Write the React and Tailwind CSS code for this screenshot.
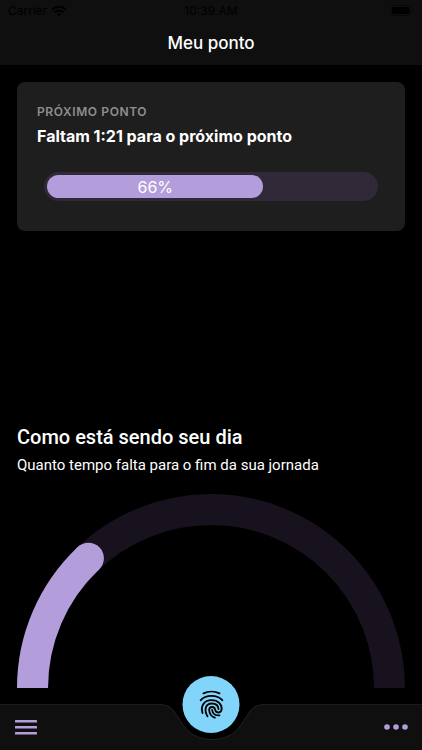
const DAY_PROGRESS = 0.259;
const NEXT_PROGRESS = 66;

const FingerprintIcon = () => (
    <svg className="block w-6 h-[29px]" viewBox="28 15 72 87" fill="none" stroke="currentColor" strokeWidth="5.6" strokeLinecap="round">
        <path d="M40 25C54 18 74 18 88 25" />
        <path d="M31 46C47 28 81 28 97 46" />
        <path d="M37 84C30 62 43 45.500 64 45.500C84 45.500 95 58 94.500 72C94 85 77 86 75 74C73 63 57 63 57 75C58 87 64 95 74 98" />
        <path d="M52 94C40 74 47 55.500 65 55.500C77 55.500 84 62 85 72" />
        <path d="M66 75C67 86 76 92 88 91" />
    </svg>
);

const StatusBar = () => (
    <div className="grid grid-cols-3 items-center h-[22px] px-2 text-xs text-black">
        <div className="flex items-center gap-1">
            <span>Carrier</span>
            <svg className="w-4 h-3" viewBox="0 0 16 12" fill="none" stroke="currentColor" strokeWidth="2">
                <path d="M1 4.6a10 10 0 0 1 14 0" />
                <path d="M3.6 7.3a6.2 6.2 0 0 1 8.8 0" />
                <path d="M8 11.6 5.7 9.3a3.3 3.3 0 0 1 4.6 0z" fill="currentColor" stroke="none" />
            </svg>
        </div>
        <span className="text-center">10:39 AM</span>
        <svg className="w-6 h-3 justify-self-end" viewBox="0 0 24 12">
            <rect x="0.5" y="0.5" width="20.5" height="10" rx="3" fill="none" stroke="currentColor" strokeOpacity="0.4" />
            <rect x="2" y="2" width="17.5" height="7" rx="1.5" fill="currentColor" />
            <path d="M22.3 3.8v3.4c.8-.3 1.2-1 1.2-1.7s-.4-1.4-1.2-1.7z" fill="currentColor" fillOpacity="0.5" />
        </svg>
    </div>
);

const NextPointCard = () => (
    <section className="bg-[#1e1e1e] rounded-lg pt-[21px] px-5 pb-[30px]">
        <h2 className="text-xs leading-[18px] font-semibold tracking-wider text-[#8e8e8e]">PRÓXIMO PONTO</h2>
        <p className="mt-1 text-base leading-[22px] font-bold text-white">Faltam 1:21 para o próximo ponto</p>
        <div
            className="mt-[25px] mx-[7px] h-[29px] rounded-full bg-[#302938] p-[3px]"
            role="progressbar"
            aria-label="Próximo ponto"
            aria-valuenow={NEXT_PROGRESS}
            aria-valuemin={0}
            aria-valuemax={100}
        >
            <div
                className="h-full rounded-full bg-[#b39ddb] flex items-center justify-center text-base text-white"
                style={{ width: `${NEXT_PROGRESS}%` }}
            >
                {NEXT_PROGRESS}%
            </div>
        </div>
    </section>
);

const DayGauge = ({ value }) => {
    const r = 178.5;
    const angle = Math.PI * value;
    const x = 194 - r * Math.cos(angle);
    const y = 194 - r * Math.sin(angle);

    return (
        <svg className="block w-full" viewBox="0 0 388 194" fill="none" strokeWidth="31">
            <path d="M15.5 194a178.5 178.5 0 0 1 357 0" stroke="#18121e" />
            <path d={`M15.5 194A${r} ${r} 0 0 1 ${x} ${y}`} stroke="#b39ddb" />
            <circle cx={x} cy={y} r="15.5" fill="#b39ddb" stroke="none" />
        </svg>
    );
};

const BottomBar = () => (
    <nav className="relative flex h-[46px]">
        <div className="flex-1 flex items-center bg-[#0f0f0f] border-t border-[#1a1a1a] pl-[15px] pb-0.5">
            <button aria-label="Menu" className="text-[#b39ddb]">
                <svg className="block w-[22px] h-4" viewBox="0 0 22 16" fill="currentColor">
                    <rect y="1" width="22" height="2.6" rx="0.6" />
                    <rect y="7" width="22" height="2.6" rx="0.6" />
                    <rect y="13" width="22" height="2.6" rx="0.6" />
                </svg>
            </button>
        </div>
        <svg className="block w-[106px] h-[46px]" viewBox="0 0 106 46" fill="none">
            <path d="M0 0.5C13 0.5 15 7 22 18C29 29.5 39 35.5 53 35.5S77 29.5 84 18C91 7 93 0.5 106 0.5V46H0z" fill="#0f0f0f" />
            <path d="M0 0.5C13 0.5 15 7 22 18C29 29.5 39 35.5 53 35.5S77 29.5 84 18C91 7 93 0.5 106 0.5" stroke="#222222" />
        </svg>
        <div className="flex-1 flex items-center justify-end bg-[#0f0f0f] border-t border-[#1a1a1a] pr-[14px] pb-0.5">
            <button aria-label="Mais opções" className="text-[#b39ddb]">
                <svg className="block w-6 h-4" viewBox="0 0 24 16" fill="currentColor">
                    <circle cx="3" cy="8" r="2.8" />
                    <circle cx="12" cy="8" r="2.8" />
                    <circle cx="21" cy="8" r="2.8" />
                </svg>
            </button>
        </div>
        <button
            aria-label="Registrar ponto"
            className="absolute left-1/2 -top-7 -translate-x-1/2 w-[57px] h-[57px] rounded-full bg-[#81d4fa] text-black flex items-center justify-center"
        >
            <FingerprintIcon />
        </button>
    </nav>
);

const App = () => {
    return (
        <div className="min-h-screen flex flex-col bg-black text-white font-['Inter',sans-serif]">
            <header className="bg-[#0f0f0f] h-[65px]">
                <StatusBar />
                <h1 className="text-center text-[17px] leading-[43px] font-medium">Meu ponto</h1>
            </header>

            <main className="flex-1 flex flex-col px-[17px] pt-[17px] pb-4">
                <NextPointCard />
                <section className="mt-auto font-['Roboto',sans-serif]">
                    <h2 className="text-xl leading-7 font-medium">Como está sendo seu dia</h2>
                    <p className="mt-1 mb-[19px] text-[15px] leading-5">Quanto tempo falta para o fim da sua jornada</p>
                    <DayGauge value={DAY_PROGRESS} />
                </section>
            </main>

            <BottomBar />
        </div>
    );
};

export default App;
